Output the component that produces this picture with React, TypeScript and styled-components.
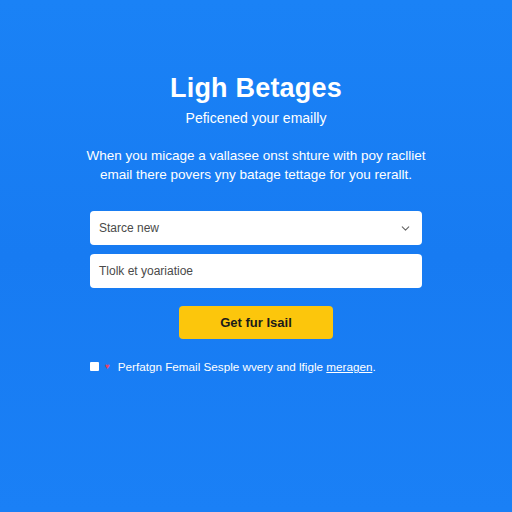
import React from 'react'
import styled, { createGlobalStyle } from 'styled-components'
import { ChevronDown } from 'lucide-react'

const GlobalStyle = createGlobalStyle`
  html, body {
    margin: 0;
    padding: 0;
  }
  body {
    font-family: "Liberation Sans", Arial, sans-serif;
  }
`

const Page = styled.div`
  width: 512px;
  height: 512px;
  box-sizing: border-box;
  background: linear-gradient(180deg, #1a82f6 0%, #177bf2 50%, #1a80f6 100%);
  display: flex;
  flex-direction: column;
  align-items: center;
  padding-top: 72px;
  color: #fff;
`

const Title = styled.h1`
  margin: 0;
  font-size: 27px;
  font-weight: 700;
  line-height: 32px;
  letter-spacing: 0.2px;
`

const Subtitle = styled.p`
  margin: 5px 0 0;
  font-size: 14px;
  line-height: 18px;
`

const Lead = styled.p`
  margin: 19px 0 0;
  width: 360px;
  text-align: center;
  font-size: 13.5px;
  line-height: 19px;
`

const Form = styled.div`
  margin-top: 27px;
  width: 332px;
  display: flex;
  flex-direction: column;
  gap: 9px;
`

const Field = styled.div`
  height: 34px;
  box-sizing: border-box;
  background: #fff;
  border-radius: 4px;
  display: flex;
  align-items: center;
  justify-content: space-between;
  padding: 0 10px 0 9px;
  color: #4a4a4a;
  font-size: 12px;
`

const ButtonRow = styled.div`
  margin-top: 18px;
  display: flex;
  justify-content: center;
`

const Button = styled.button`
  width: 154px;
  height: 33px;
  border: none;
  border-radius: 4px;
  background: #fcc60c;
  color: #1a1a1a;
  font-family: inherit;
  font-size: 13px;
  font-weight: 700;
`

const Consent = styled.label`
  margin-top: 21px;
  width: 332px;
  display: flex;
  align-items: center;
  gap: 6px;
  font-size: 11.7px;
`

const Box = styled.span`
  width: 9px;
  height: 9px;
  background: #fff;
  border-radius: 1px;
`

const Mark = styled.span`
  color: #e0456a;
  font-size: 8px;
  margin-right: 2px;
`

const Link = styled.span`
  text-decoration: underline;
`

export default function App() {
  return (
    <>
      <GlobalStyle />
      <Page>
        <Title>Ligh Betages</Title>
        <Subtitle>Peficened your emailly</Subtitle>
        <Lead>
          When you micage a vallasee onst shture with poy raclliet email there povers yny batage tettage for you rerallt.
        </Lead>
        <Form>
          <Field>
            <span>Starce new</span>
            <ChevronDown size={13} color="#666" strokeWidth={2} />
          </Field>
          <Field>
            <span>Tlolk et yoariatioe</span>
          </Field>
        </Form>
        <ButtonRow>
          <Button>Get fur Isail</Button>
        </ButtonRow>
        <Consent>
          <Box />
          <Mark>♥</Mark>
          <span>
            Perfatgn Femail Sesple wvery and lfigle <Link>meragen</Link>.
          </span>
        </Consent>
      </Page>
    </>
  )
}
